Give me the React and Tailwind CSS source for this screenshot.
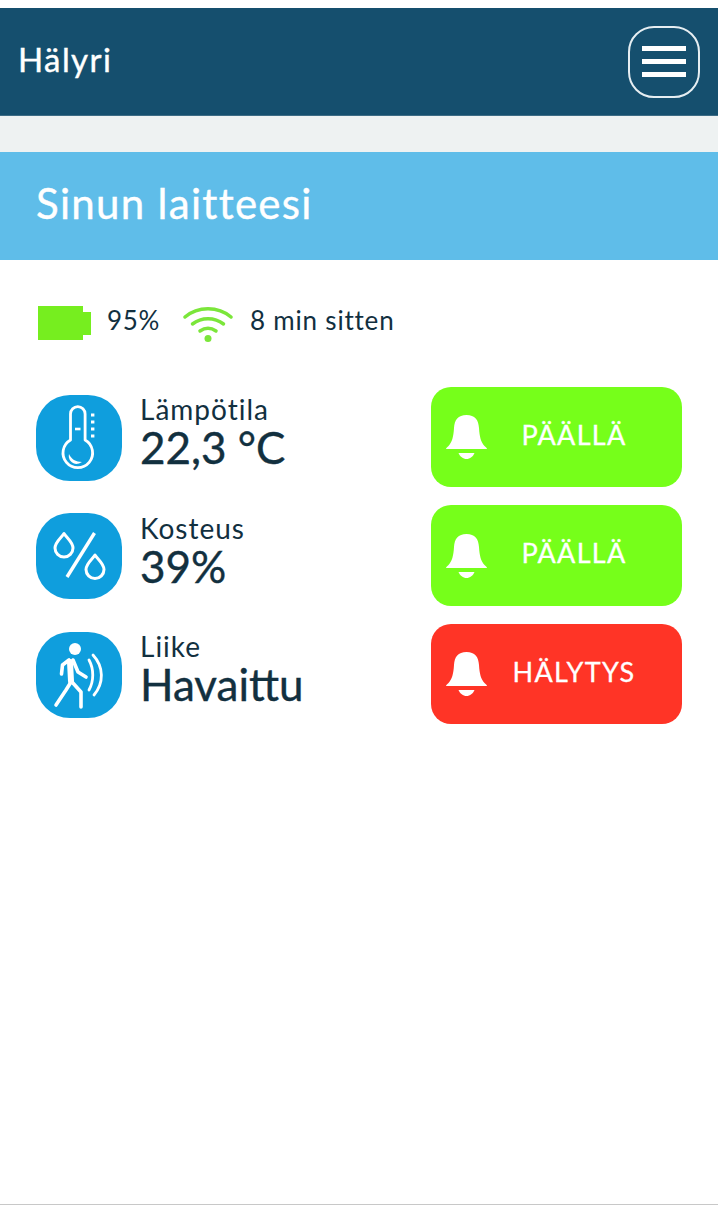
import React from 'react';

const ThermometerIcon = () => (
  <svg viewBox="0 0 86 86" className="w-full h-full" fill="none" stroke="white" strokeLinecap="round" strokeLinejoin="round">
    <path strokeWidth="2.800" d="M34.500 45V19a7.300 7.300 0 0 1 14.600 0V45a14.800 14.800 0 1 1-14.600 0Z" />
    <path fill="white" stroke="none" d="M33 59c2 5 7 8 13 8-3 2-6 2.500-8 1.500-3.500-1.500-6-5-5-9.500Z" />
    <path strokeWidth="2.600" strokeLinecap="butt" d="M39 34h5.500" />
    <path strokeWidth="3.200" strokeLinecap="butt" d="M55 20h3.400M55 27h3.400M55 34h3.400M55 41h3.400" />
  </svg>
);

const HumidityIcon = () => (
  <svg viewBox="0 0 86 86" className="w-full h-full" fill="none" stroke="white" strokeLinecap="round" strokeLinejoin="round">
    <path strokeWidth="3.400" strokeLinecap="butt" d="M31 64 58.500 20" />
    <path strokeWidth="3" d="M28 20.500c-2.500 4-9 8.500-9 14.500a9 9 0 0 0 18 0c0-6-6.500-10.500-9-14.500Z" />
    <path strokeWidth="3" d="M59 42c-2.500 4-9 8.500-9 14.500a9 9 0 0 0 18 0c0-6-6.500-10.500-9-14.500Z" />
  </svg>
);

const MotionIcon = () => (
  <svg viewBox="0 0 86 86" className="w-full h-full" fill="none" stroke="white" strokeLinecap="round" strokeLinejoin="round">
    <circle cx="39" cy="17" r="6" fill="white" stroke="none" />
    <path strokeWidth="6" d="M34 30l1 19" />
    <path strokeWidth="3.600" d="M33 28l-6.500 5-1 9M37 28l5 12 8 5M35 50l-5 8-10 15M36 50l9 10v15" />
    <path strokeWidth="2.800" d="M53 28c5 9 5 21 0 30" />
    <path strokeWidth="2.800" d="M57 23c11 12 11 28 1 40" />
  </svg>
);

const BellIcon = () => (
  <svg viewBox="0 0 41 44" className="w-[41px] h-[44px] shrink-0" fill="white">
    <path d="M20.500 0C12 0 8.500 5 8 13c-.5 9-2 14-5.500 18C1.500 32 0 33 0 34h41c0-1-1.500-2-2.500-3-3.500-4-5-9-5.500-18C32.500 5 29 0 20.500 0Z" />
    <path d="M12.500 38h16c-1.500 3.500-4.500 6-8 6s-6.500-2.500-8-6Z" />
  </svg>
);

const sensors = [
  { label: 'Lämpötila', value: '22,3 °C', icon: <ThermometerIcon />, status: 'PÄÄLLÄ', color: 'bg-[#76ff1a]', height: 'h-[100px]' },
  { label: 'Kosteus', value: '39%', icon: <HumidityIcon />, status: 'PÄÄLLÄ', color: 'bg-[#76ff1a]', height: 'h-[101px]' },
  { label: 'Liike', value: 'Havaittu', icon: <MotionIcon />, status: 'HÄLYTYS', color: 'bg-[#ff3426]', height: 'h-[100px]' },
];

const App = () => {
  return (
    <div className="min-h-[1205px] flex flex-col bg-white font-['Lato',sans-serif] text-[#12303f] border-b border-[#c8c8c8]">
      {/* Header */}
      <div className="mt-2 h-[108px] bg-[#154f6e] flex items-center justify-between px-[18px] border-b border-[#3d6c85]">
        <span className="text-[33px] text-white tracking-[1.4px] pb-[3px] [-webkit-text-stroke:0.4px_white]">Hälyri</span>
        <button className="w-[72px] h-[72px] rounded-[26px] border-2 border-[#e6eef2] flex flex-col items-center justify-center gap-[8px]">
          <span className="w-[44px] h-[5px] bg-white" />
          <span className="w-[44px] h-[5px] bg-white" />
          <span className="w-[44px] h-[5px] bg-white" />
        </button>
      </div>

      <div className="h-[36px] bg-[#eef2f2]" />

      {/* Title band */}
      <div className="h-[108px] bg-[#5fbde9] flex items-center px-9">
        <h1 className="text-[42px] text-white tracking-[1.3px] pb-[6px] [-webkit-text-stroke:0.4px_white]">Sinun laitteesi</h1>
      </div>

      {/* Status row */}
      <div className="mt-[44px] pl-[38px] flex items-center h-[38px] text-[26px]">
        <div className="flex items-center">
          <div className="w-[45px] h-[34px] bg-[#76ee1f]" />
          <div className="w-2 h-[23px] bg-[#76ee1f]" />
        </div>
        <span className="ml-4 w-[76px] tracking-[0.7px] pb-[6px]">95%</span>
        <svg viewBox="0 0 50 38" className="w-[50px] h-[38px] shrink-0" fill="none" stroke="#7be63a" strokeWidth="3.500" strokeLinecap="round">
          <path d="M2 13C15 2 35 2 48 13" />
          <path d="M9.500 20c9-7 22-7 31 0" />
          <path d="M17 27c5-3.500 11-3.500 16 0" />
          <circle cx="25" cy="34.500" r="3.500" fill="#7be63a" stroke="none" />
        </svg>
        <span className="ml-[17px] tracking-[0.8px] pb-[6px]">8 min sitten</span>
      </div>

      {/* Sensors */}
      <div className="mt-[45px] px-9 flex flex-col gap-[18px]">
        {sensors.map((sensor) => (
          <div key={sensor.label} className={`flex items-center justify-between ${sensor.height}`}>
            <div className="flex items-center gap-[18px]">
              <div className="w-[86px] h-[86px] mt-px rounded-[34px] bg-[#0f9edd]">{sensor.icon}</div>
              <div className="flex flex-col pb-[10px]">
                <span className="text-[28px] tracking-[1px] leading-[30px]">{sensor.label}</span>
                <span className="text-[44px] leading-[46px] [-webkit-text-stroke:0.4px_#12303f]">{sensor.value}</span>
              </div>
            </div>
            <div className={`w-[251px] h-full rounded-[20px] flex items-center pl-[15px] pr-[21px] ${sensor.color}`}>
              <BellIcon />
              <span className="flex-1 text-center text-[27px] text-white tracking-[1.3px] pb-[4px] [-webkit-text-stroke:0.3px_white]">{sensor.status}</span>
            </div>
          </div>
        ))}
      </div>
    </div>
  );
};

export default App;
